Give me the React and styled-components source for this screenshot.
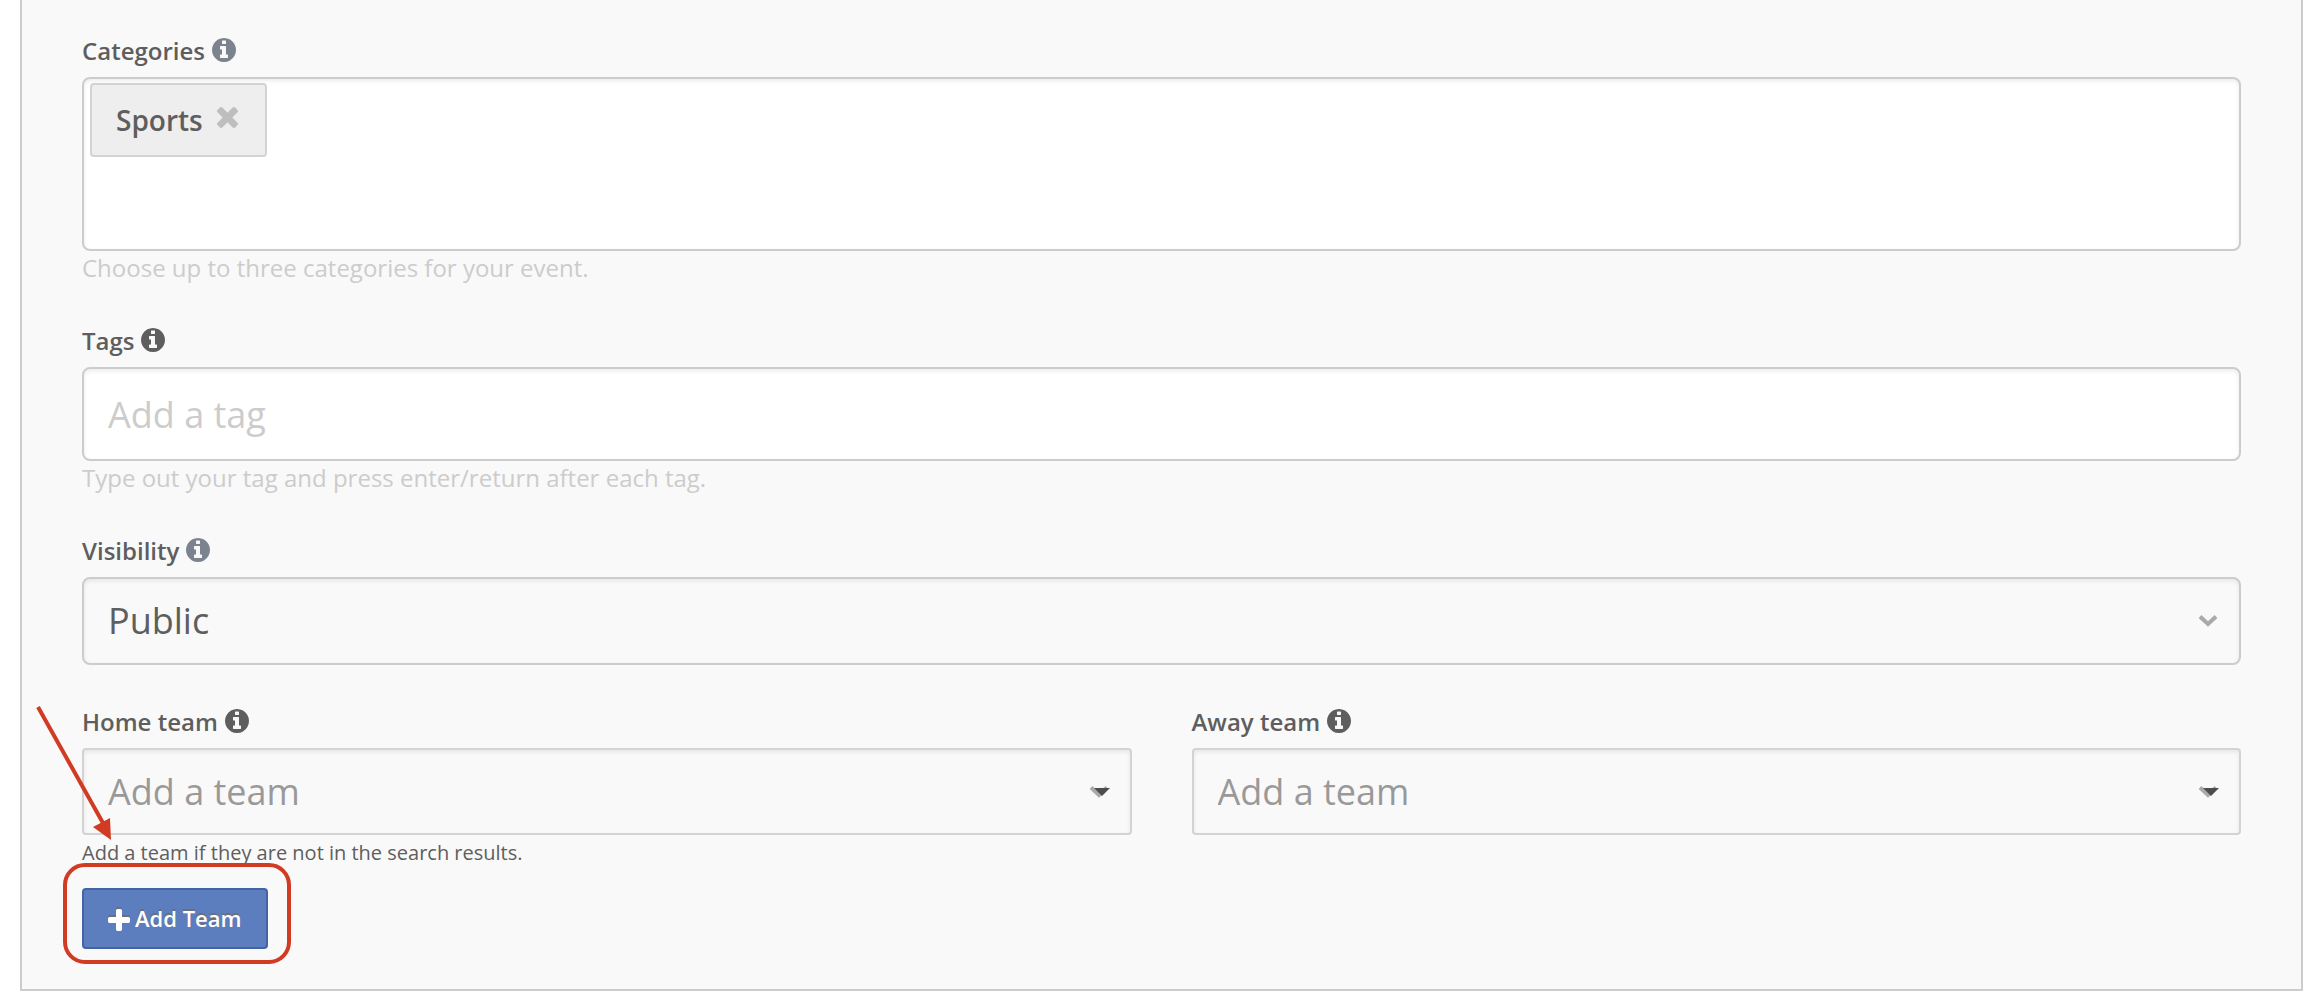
import React, { useState } from 'react';
import styled, { createGlobalStyle } from 'styled-components';

const GlobalStyle = createGlobalStyle`
   * {
      box-sizing: border-box;
   }

   body {
      margin: 0;
      background: #fff;
      color: #5e5e5e;
      font-family: 'Open Sans', 'Noto Sans', sans-serif;
   }

   button,
   input,
   select {
      font-family: inherit;
   }
`;

const PanelStyle = styled.form`
   display: flex;
   flex-direction: column;
   gap: 40px;
   margin: 0 13px 0 20px;
   padding: 35px 60px 40px;
   background: #f9f9f9;
   border: 2px solid #ccc;
   border-top: 0;
`;

const FieldStyle = styled.div`
   position: relative;
   display: flex;
   flex-direction: column;
   min-width: 0;
`;

const LabelRowStyle = styled.div`
   display: flex;
   align-items: center;
   gap: 7px;
   margin-bottom: 10px;
   font-size: 24px;
   font-weight: 600;
   line-height: 32px;
`;

const InfoIconStyle = styled.svg`
   width: 24px;
   height: 24px;
   margin-bottom: 2px;
   fill: ${({ $muted }) => ($muted ? '#7b838e' : '#5e5e5e')};
`;

const HelpStyle = styled.p`
   margin: 0;
   color: #ccc;
   font-size: 24px;
   line-height: 34px;
`;

const NoteStyle = styled.p`
   margin: 3px 0 20px;
   font-size: 20px;
   line-height: 30px;
`;

const TagBoxStyle = styled.div`
   display: flex;
   align-items: flex-start;
   gap: 8px;
   min-height: 174px;
   padding: 4px 6px;
   background: #fff;
   border: 2px solid #ccc;
   border-radius: 8px;
   box-shadow: inset 0 2px 4px rgba(0, 0, 0, 0.08);
`;

const TagBoxStyle__input = styled.input`
   flex: 1;
   height: 74px;
   border: 0;
   outline: 0;
   background: transparent;
   color: inherit;
   font-size: 28px;
`;

const TagStyle = styled.span`
   display: flex;
   align-items: center;
   gap: 14px;
   height: 74px;
   padding: 0 27px 0 24px;
   background: #eee;
   border: 2px solid #d3d3d3;
   border-radius: 4px;
   font-size: 28px;
   font-weight: 600;
`;

const TagStyle__remove = styled.button`
   display: flex;
   padding: 0 0 6px;
   border: 0;
   background: none;
   cursor: pointer;

   & svg {
      width: 21px;
      height: 21px;
      fill: #bebebe;
   }
`;

const InputStyle = styled.input`
   width: 100%;
   height: 94px;
   padding: 0 24px;
   background: #fff;
   border: 2px solid #ccc;
   border-radius: 8px;
   box-shadow: inset 0 2px 4px rgba(0, 0, 0, 0.08);
   color: #5e5e5e;
   font-size: 36px;

   &::placeholder {
      color: #ccc;
      opacity: 1;
   }
`;

const SelectStyle = styled.div`
   position: relative;
   display: grid;

   & svg {
      position: absolute;
      right: 21px;
      top: 50%;
      width: 22px;
      height: 12px;
      margin-top: -6px;
      pointer-events: none;
   }
`;

const SelectStyle__control = styled.select`
   appearance: none;
   width: 100%;
   height: ${({ $picker }) => ($picker ? '87px' : '88px')};
   padding: ${({ $picker }) => ($picker ? '0 60px 0 24px' : '0 60px 2px 24px')};
   background: #f9f9f9;
   border: 2px solid ${({ $picker }) => ($picker ? '#d3d3d3' : '#ccc')};
   border-radius: ${({ $picker }) => ($picker ? '4px' : '8px')};
   box-shadow: inset 0 2px 4px rgba(0, 0, 0, 0.08);
   color: ${({ $picker }) => ($picker ? '#999' : '#5e5e5e')};
   font-size: 36px;
`;

const TeamsStyle = styled.div`
   display: grid;
   grid-template-columns: 1fr 1fr;
   align-items: start;
   gap: 60px;
   padding-top: 1px;
`;

const HighlightStyle = styled.div`
   position: relative;
   align-self: flex-start;

   &::after {
      content: '';
      position: absolute;
      inset: -25px -23px -15px -19px;
      border: 4px solid #d23b23;
      border-radius: 22px;
      pointer-events: none;
   }
`;

const ArrowStyle = styled.svg`
   position: absolute;
   left: -46px;
   top: 0;
   width: 80px;
   height: 140px;
   pointer-events: none;
`;

const ButtonStyle = styled.button`
   display: flex;
   align-items: center;
   gap: 5px;
   height: 61px;
   padding: 0 24px 2px;
   background: #5c7ebe;
   border: 2px solid #4263a6;
   border-radius: 4px;
   color: #fff;
   font-size: 22px;
   font-weight: 600;
   text-shadow: 0 -2px 0 #6b6f78;
   cursor: pointer;

   & svg {
      width: 22px;
      height: 22px;
      margin-top: 4px;
      fill: #fff;
      filter: drop-shadow(0 -2px 0 #6b6f78);
   }
`;

const InfoIcon = ({ muted }) => (
   <InfoIconStyle $muted={muted} viewBox="0 128 1536 1536" aria-hidden="true">
      <path d="M1024 1376v-160q0-14-9-23t-23-9h-96v-512q0-14-9-23t-23-9h-320q-14 0-23 9t-9 23v160q0 14 9 23t23 9h96v320h-96q-14 0-23 9t-9 23v160q0 14 9 23t23 9h448q14 0 23-9t9-23zm-128-896v-160q0-14-9-23t-23-9h-192q-14 0-23 9t-9 23v160q0 14 9 23t23 9h192q14 0 23-9t9-23zm640 416q0 209-103 385.5t-279.5 279.5-385.5 103-385.5-103-279.5-279.5-103-385.5 103-385.5 279.5-279.5 385.5-103 385.5 103 279.5 279.5 103 385.5z" />
   </InfoIconStyle>
);

const Field = ({ id, label, muted, children }) => (
   <FieldStyle>
      <LabelRowStyle>
         <label htmlFor={id}>{label}</label>
         <InfoIcon muted={muted} />
      </LabelRowStyle>
      {children}
   </FieldStyle>
);

const Chevron = ({ filled }) => (
   <svg viewBox="0 0 22 12" aria-hidden="true">
      <path d="M2 1.5 L10 9 L18 1.5" fill="none" stroke="#aaa" strokeWidth="4" />
      {filled && <path d="M5 2 H21 L13 10 Z" fill="#4d4d4d" />}
   </svg>
);

const TeamSelect = ({ id }) => (
   <SelectStyle>
      <SelectStyle__control id={id} $picker>
         <option>Add a team</option>
      </SelectStyle__control>
      <Chevron filled />
   </SelectStyle>
);

const App = () => {
   const [categories, setCategories] = useState(['Sports']);

   const removeCategory = (name) =>
      setCategories(categories.filter((item) => item !== name));

   return (
      <>
         <GlobalStyle />
         <PanelStyle>
            <Field id="categories" label="Categories" muted>
               <TagBoxStyle>
                  {categories.map((name) => (
                     <TagStyle key={name}>
                        {name}
                        <TagStyle__remove
                           type="button"
                           aria-label={`Remove ${name}`}
                           onClick={() => removeCategory(name)}
                        >
                           <svg viewBox="302 366 1188 1188">
                              <path d="M1490 1322q0 40-28 68l-136 136q-28 28-68 28t-68-28l-294-294-294 294q-28 28-68 28t-68-28l-136-136q-28-28-28-68t28-68l294-294-294-294q-28-28-28-68t28-68l136-136q28-28 68-28t68 28l294 294 294-294q28-28 68-28t68 28l136 136q28 28 28 68t-28 68l-294 294 294 294q28 28 28 68z" />
                           </svg>
                        </TagStyle__remove>
                     </TagStyle>
                  ))}
                  <TagBoxStyle__input id="categories" type="text" />
               </TagBoxStyle>
               <HelpStyle>Choose up to three categories for your event.</HelpStyle>
            </Field>

            <Field id="tags" label="Tags">
               <InputStyle id="tags" type="text" placeholder="Add a tag" />
               <HelpStyle>
                  Type out your tag and press enter/return after each tag.
               </HelpStyle>
            </Field>

            <Field id="visibility" label="Visibility" muted>
               <SelectStyle>
                  <SelectStyle__control id="visibility">
                     <option>Public</option>
                  </SelectStyle__control>
                  <Chevron />
               </SelectStyle>
            </Field>

            <TeamsStyle>
               <Field id="home-team" label="Home team">
                  <TeamSelect id="home-team" />
                  <NoteStyle>Add a team if they are not in the search results.</NoteStyle>
                  <HighlightStyle>
                     <ButtonStyle type="button">
                        <svg viewBox="192 128 1408 1408" aria-hidden="true">
                           <path d="M1600 736v192q0 40-28 68t-68 28h-416v416q0 40-28 68t-68 28h-192q-40 0-68-28t-28-68v-416h-416q-40 0-68-28t-28-68v-192q0-40 28-68t68-28h416v-416q0-40 28-68t68-28h192q40 0 68 28t28 68v416h416q40 0 68 28t28 68z" />
                        </svg>
                        Add Team
                     </ButtonStyle>
                  </HighlightStyle>
                  <ArrowStyle viewBox="0 0 80 140" aria-hidden="true">
                     <path d="M2 1 L67 117" stroke="#d23b23" strokeWidth="4" />
                     <path d="M75 134 L57 121 L74 112 Z" fill="#d23b23" />
                  </ArrowStyle>
               </Field>

               <Field id="away-team" label="Away team">
                  <TeamSelect id="away-team" />
               </Field>
            </TeamsStyle>
         </PanelStyle>
      </>
   );
};

export default App;
